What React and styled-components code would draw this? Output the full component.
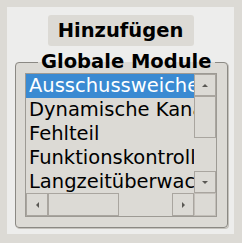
import React from "react";
import styled, { createGlobalStyle } from "styled-components";

const Global = createGlobalStyle`
  html, body { margin: 0; padding: 0; background: #dcdad5; }
  body { font-family: "DejaVu Sans", "Liberation Sans", sans-serif; }
`;

const Panel = styled.div`
  margin: 7px;
  width: 227px;
  height: 227px;
  box-sizing: border-box;
  background: #ededec;
  display: flex;
  flex-direction: column;
  align-items: center;
  padding-top: 8px;
`;

const AddButton = styled.button`
  width: 146px;
  height: 31px;
  background: #dcdad5;
  border: none;
  border-radius: 3px;
  padding: 0;
  font-family: "DejaVu Sans", sans-serif;
  font-weight: bold;
  font-size: 19.5px;
  line-height: 31px;
  color: #000;
`;

const Group = styled.fieldset`
  align-self: stretch;
  margin: 5px 6px 0 8px;
  padding: 0 10px 10px 9px;
  border: 1px solid #8b8984;
  border-radius: 4px;
  background: #dcdad5;
  box-shadow: 1px 1px 0 #c4c1bb;
  min-width: 0;
`;

const Legend = styled.legend`
  margin-left: 13px;
  padding: 0 4px 0 3px;
  white-space: nowrap;
  font-weight: bold;
  font-size: 19.5px;
  line-height: 22px;
  color: #000;
`;

const ListBox = styled.div`
  width: 192px;
  height: 144px;
  box-sizing: border-box;
  border: 1px solid #9d9a94;
  display: grid;
  grid-template-columns: 168px 22px;
  grid-template-rows: 119px 23px;
  background: #dcdad5;
`;

const List = styled.div`
  overflow: hidden;
`;

const Item = styled.div`
  height: 24px;
  line-height: 24px;
  padding-left: 3px;
  white-space: nowrap;
  font-size: 19.5px;
  color: ${(p) => (p.$selected ? "#fff" : "#000")};
  background: ${(p) => (p.$selected ? "#3a8ad2" : "transparent")};
`;

const VBar = styled.div`
  display: flex;
  flex-direction: column;
`;

const HBar = styled.div`
  display: flex;
`;

const ArrowButton = styled.div`
  flex: none;
  width: ${(p) => (p.$horizontal ? "22px" : "auto")};
  height: ${(p) => (p.$horizontal ? "auto" : "22px")};
  box-sizing: border-box;
  border: 1px solid #a9a59f;
  background: #dcdad5;
  display: flex;
  align-items: center;
  justify-content: center;
`;

const Thumb = styled.div`
  flex: none;
  box-sizing: border-box;
  border: 1px solid #a9a59f;
  background: #dcdad5;
  width: ${(p) => p.$w || "auto"};
  height: ${(p) => p.$h || "auto"};
`;

const Trough = styled.div`
  flex: 1;
  background: #dcdad5;
`;

const Corner = styled.div`
  box-sizing: border-box;
  border: 1px solid #c2beb8;
  background: #dcdad5;
`;

const Arrow = ({ dir }) => {
  const pts = {
    up: "0,4 6,4 3,1",
    down: "0,1 6,1 3,4",
    left: "4,0 4,6 1,3",
    right: "1,0 1,6 4,3",
  }[dir];
  const horiz = dir === "left" || dir === "right";
  return (
    <svg width={horiz ? 5 : 6} height={horiz ? 6 : 5} viewBox={horiz ? "0 0 5 6" : "0 0 6 5"}>
      <polygon points={pts} fill="#5a5854" />
    </svg>
  );
};

const items = [
  "Ausschussweiche",
  "Dynamische Kanalüberwachung",
  "Fehlteil",
  "Funktionskontrolle",
  "Langzeitüberwachung",
];

export default function App() {
  return (
    <>
      <Global />
      <Panel>
        <AddButton>Hinzufügen</AddButton>
        <Group>
          <Legend>Globale Module</Legend>
          <ListBox>
            <List>
              {items.map((t, i) => (
                <Item key={t} $selected={i === 0}>
                  {t}
                </Item>
              ))}
            </List>
            <VBar>
              <ArrowButton>
                <Arrow dir="up" />
              </ArrowButton>
              <Thumb $h="42px" />
              <Trough />
              <ArrowButton>
                <Arrow dir="down" />
              </ArrowButton>
            </VBar>
            <HBar>
              <ArrowButton $horizontal>
                <Arrow dir="left" />
              </ArrowButton>
              <Thumb $w="71px" />
              <Trough />
              <ArrowButton $horizontal>
                <Arrow dir="right" />
              </ArrowButton>
            </HBar>
            <Corner />
          </ListBox>
        </Group>
      </Panel>
    </>
  );
}
